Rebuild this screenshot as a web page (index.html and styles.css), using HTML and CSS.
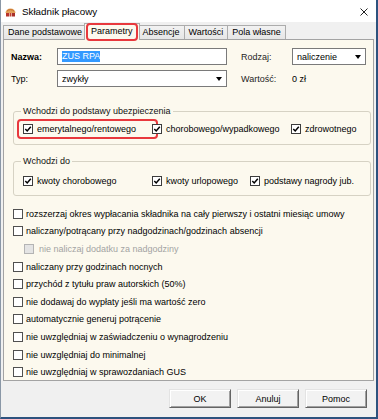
FILE: index.html
```html
<!DOCTYPE html>
<html lang="pl">
<head>
<meta charset="utf-8">
<title>Składnik płacowy</title>
<link rel="stylesheet" href="styles.css">
</head>
<body>
<div class="window">
  <div class="titlebar">
    <svg class="app-icon" width="11" height="9" viewBox="0 0 11 9">
      <path d="M0.5 5 A5 4.5 0 0 1 10.5 5 Z" fill="#e2a15a"/>
      <path d="M2 3.2 A4 3 0 0 1 9 3.2" fill="none" stroke="#c46a25" stroke-width="1"/>
      <rect x="1" y="5" width="3" height="3.5" fill="#b8322a"/>
      <rect x="4.5" y="5" width="2" height="3.5" fill="#c2412e"/>
      <rect x="7" y="5" width="3" height="3.5" fill="#a8302a"/>
    </svg>
    <span class="title">Składnik płacowy</span>
    <svg class="close" width="8" height="8" viewBox="0 0 8 8">
      <path d="M0.5 0.5 L7.5 7.5 M7.5 0.5 L0.5 7.5" stroke="#222" stroke-width="1" fill="none"/>
    </svg>
  </div>

  <div class="tabs">
    <div class="tab">Dane podstawowe</div>
    <div class="tab active hl-tab">Parametry</div>
    <div class="tab">Absencje</div>
    <div class="tab">Wartości</div>
    <div class="tab">Pola własne</div>
  </div>

  <div class="panel">
    <div class="form">
      <span class="lbl bold">Nazwa:</span>
      <div class="field"><span class="selected-text">ZUS RPA</span></div>
      <span class="lbl lbl-right">Rodzaj:</span>
      <div class="field combo"><span class="combo-text">naliczenie</span><i class="arrow"></i></div>

      <span class="lbl">Typ:</span>
      <div class="field combo"><span class="combo-text">zwykły</span><i class="arrow"></i></div>
      <span class="lbl lbl-right">Wartość:</span>
      <span class="value">0 zł</span>
    </div>

    <fieldset class="group">
      <legend>Wchodzi do podstawy ubezpieczenia</legend>
      <div class="group-row cols-1">
        <span class="check hl-check"><span class="box"><svg viewBox="0 0 8 8"><path d="M1.3 4 L3.2 6 L6.8 1.8" stroke="#000" stroke-width="1.5" fill="none"/></svg></span>emerytalnego/rentowego</span>
        <span class="check"><span class="box"><svg viewBox="0 0 8 8"><path d="M1.3 4 L3.2 6 L6.8 1.8" stroke="#000" stroke-width="1.5" fill="none"/></svg></span>chorobowego/wypadkowego</span>
        <span class="check"><span class="box"><svg viewBox="0 0 8 8"><path d="M1.3 4 L3.2 6 L6.8 1.8" stroke="#000" stroke-width="1.5" fill="none"/></svg></span>zdrowotnego</span>
      </div>
    </fieldset>

    <fieldset class="group group-2">
      <legend>Wchodzi do</legend>
      <div class="group-row cols-2">
        <span class="check"><span class="box"><svg viewBox="0 0 8 8"><path d="M1.3 4 L3.2 6 L6.8 1.8" stroke="#000" stroke-width="1.5" fill="none"/></svg></span>kwoty chorobowego</span>
        <span class="check"><span class="box"><svg viewBox="0 0 8 8"><path d="M1.3 4 L3.2 6 L6.8 1.8" stroke="#000" stroke-width="1.5" fill="none"/></svg></span>kwoty urlopowego</span>
        <span class="check"><span class="box"><svg viewBox="0 0 8 8"><path d="M1.3 4 L3.2 6 L6.8 1.8" stroke="#000" stroke-width="1.5" fill="none"/></svg></span>podstawy nagrody jub.</span>
      </div>
    </fieldset>

    <div class="options">
      <div class="opt"><span class="box"></span>rozszerzaj okres wypłacania składnika na cały pierwszy i ostatni miesiąc umowy</div>
      <div class="opt"><span class="box"></span>naliczany/potrącany przy nadgodzinach/godzinach absencji</div>
      <div class="opt sub disabled"><span class="box"></span>nie naliczaj dodatku za nadgodziny</div>
      <div class="opt"><span class="box"></span>naliczany przy godzinach nocnych</div>
      <div class="opt"><span class="box"></span>przychód z tytułu praw autorskich (50%)</div>
      <div class="opt"><span class="box"></span>nie dodawaj do wypłaty jeśli ma wartość zero</div>
      <div class="opt"><span class="box"></span>automatycznie generuj potrącenie</div>
      <div class="opt"><span class="box"></span>nie uwzględniaj w zaświadczeniu o wynagrodzeniu</div>
      <div class="opt"><span class="box"></span>nie uwzględniaj do minimalnej</div>
      <div class="opt"><span class="box"></span>nie uwzględniaj w sprawozdaniach GUS</div>
    </div>
  </div>

  <div class="buttons">
    <button class="btn">OK</button>
    <button class="btn">Anuluj</button>
    <button class="btn">Pomoc</button>
  </div>
</div>
</body>
</html>
```

FILE: styles.css
```css
* { box-sizing: border-box; }
html, body { margin: 0; padding: 0; }
body {
  width: 378px;
  height: 419px;
  overflow: hidden;
  background: #ffffff;
  font-family: "Liberation Sans", Arial, sans-serif;
  font-size: 9px;
  color: #000;
}
.window {
  width: 378px;
  height: 419px;
  display: flex;
  flex-direction: column;
  background: #f0f0f0;
  border-left: 1px solid #8a97a6;
  border-right: 2px solid #2d527e;
  border-bottom: 2px solid #2d527e;
}
.titlebar {
  height: 22px;
  flex: none;
  background: #fff;
  display: flex;
  align-items: center;
  padding: 1px 8px 0 4px;
}
.app-icon { flex: none; margin-right: 6px; margin-top: 1px; }
.title { flex: 1; font-size: 9.8px; color: #000; }
.close { flex: none; }

.tabs {
  flex: none;
  height: 17px;
  display: flex;
  align-items: flex-end;
  padding: 0 0 0 2px;
  position: relative;
  z-index: 1;
}
.tab {
  height: 14px;
  line-height: 12px;
  padding: 0 4px;
  border: 1px solid #acacac;
  border-bottom: none;
  background: linear-gradient(#f2f2f2, #e6e6e6);
  margin-right: -1px;
  white-space: nowrap;
}
.tab.active {
  height: 17px;
  margin: 0 -2px -1px -2px;
  padding: 0 6px;
  line-height: 14px;
  background: #fcf9ee;
  position: relative;
  z-index: 2;
}
.hl-tab::after {
  content: "";
  position: absolute;
  left: 1px;
  right: 1px;
  top: -1px;
  bottom: -1px;
  border: 2px solid #e8383d;
  border-radius: 4px;
}

.panel {
  flex: none;
  height: 342px;
  margin: 0 2px 0 2px;
  background: #fcf9ee;
  border: 1px solid #a3a3a3;
  padding: 8px 2px 0 9px;
}

.form {
  margin-left: -2px;
  display: grid;
  grid-template-columns: 46px 170px 65px 74px;
  row-gap: 5px;
  grid-auto-rows: 17px;
}
.lbl, .value { display: flex; align-items: center; }
.lbl-right { padding-left: 14px; color: #1e1e1e; }
.bold { font-weight: bold; }
.field {
  background: #fff;
  border: 1px solid #7a7a7a;
  display: flex;
  align-items: center;
  padding: 0 3px 0 4px;
}
.selected-text {
  background: #3399ff;
  color: #fff;
  line-height: 11px;
}
.combo-text { flex: 1; }
.arrow {
  width: 0;
  height: 0;
  border-left: 3.5px solid transparent;
  border-right: 3.5px solid transparent;
  border-top: 4px solid #000;
  margin-right: 1px;
}

.group {
  margin: 18px 0 0 0;
  width: 358px;
  padding: 4px 7px 7px 7px;
  border: 1px solid #d6d2c4;
  border-radius: 3px;
  min-width: 0;
}
.group legend {
  padding: 0 2px;
  line-height: 12px;
  color: #111;
}
.group-2 { margin-top: 10px; padding-top: 6px; padding-bottom: 6px; }
.group-row {
  display: grid;
  margin-left: 2px;
  height: 16px;
  align-items: center;
}
.cols-1 { grid-template-columns: 129px 139px auto; }
.cols-2 { grid-template-columns: 129px 98px auto; }
.check {
  display: flex;
  align-items: center;
  white-space: nowrap;
  position: relative;
}
.hl-check::after {
  content: "";
  position: absolute;
  left: -6px;
  right: -6px;
  top: -5px;
  bottom: -5px;
  border: 2px solid #e8383d;
  border-radius: 4px;
}
.box {
  width: 10px;
  height: 10px;
  flex: none;
  border: 1px solid #3c3c3c;
  background: #fff;
  margin-right: 4px;
  display: flex;
  align-items: center;
  justify-content: center;
}
.box svg { width: 8px; height: 8px; display: block; }

.options { margin-top: 9px; }
.opt {
  height: 17.6px;
  display: flex;
  align-items: center;
  white-space: nowrap;
}
.opt .box { border-color: #505050; margin-right: 3px; }
.opt.sub { padding-left: 11px; }
.opt.disabled { color: #a3a3a3; }
.opt.disabled .box { background: #e4e4e4; border-color: #b4b4b4; margin-right: 5px; }

.buttons {
  flex: 1;
  display: flex;
  justify-content: flex-end;
  align-items: flex-start;
  gap: 6px;
  padding: 8px 9px 0 0;
}
.btn {
  width: 62px;
  height: 19px;
  font-family: "Liberation Sans", Arial, sans-serif;
  font-size: 9px;
  color: #000;
  background: #f2f2f2;
  border: 1px solid;
  border-color: #e3e3e3 #646464 #646464 #e3e3e3;
  box-shadow: inset 1px 1px 0 #ffffff, inset -1px -1px 0 #a0a0a0;
  padding: 0;
}
```
